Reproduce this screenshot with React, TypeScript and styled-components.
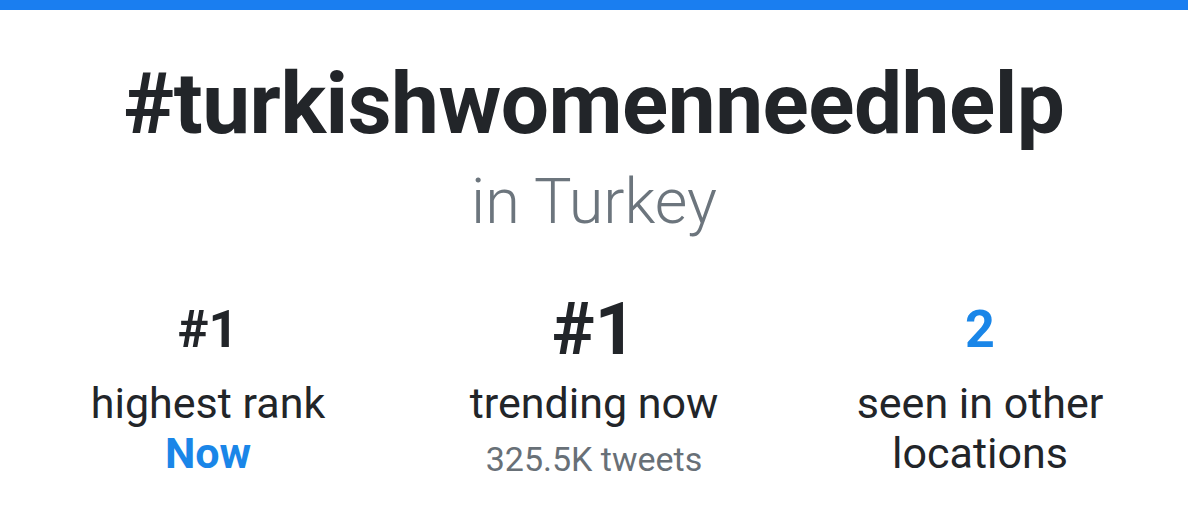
import styled, { createGlobalStyle } from "styled-components";

const GlobalStyle = createGlobalStyle`
  html, body {
    margin: 0;
    padding: 0;
    background: #ffffff;
  }
  body {
    font-family: Roboto, "Noto Sans", "Liberation Sans", sans-serif;
    color: #222529;
  }
`;

const Card = styled.div`
  width: 1188px;
  height: 524px;
  background: #fff;
  border-top: 10px solid #1a7ef0;
  box-sizing: border-box;
  display: flex;
  flex-direction: column;
  align-items: center;
`;

const Hashtag = styled.h1`
  margin: 44px 0 0;
  font-size: 85.5px;
  line-height: 100px;
  font-weight: 700;
  letter-spacing: -0.5px;
  color: #222529;
`;

const Location = styled.div`
  margin-top: 12px;
  font-size: 63px;
  line-height: 72px;
  font-weight: 300;
  color: #6c757d;
`;

const Stats = styled.div`
  align-self: stretch;
  margin-top: 56px;
  padding: 0 15px;
  display: grid;
  grid-template-columns: repeat(3, 1fr);
  text-align: center;
`;

const Stat = styled.div`
  display: flex;
  flex-direction: column;
  align-items: center;
`;

const Value = styled.div<{ $big?: boolean; $accent?: boolean }>`
  margin-bottom: 12px;
  font-size: ${({ $big }) => ($big ? "72px" : "52px")};
  line-height: 72px;
  font-weight: 700;
  color: ${({ $accent }) => ($accent ? "#1a86e8" : "#222529")};
`;

const Label = styled.div`
  font-size: 43px;
  line-height: 50px;
  font-weight: 400;
  color: #222529;
`;

const Note = styled.div<{ $accent?: boolean }>`
  padding-top: ${({ $accent }) => ($accent ? "0" : "6px")};
  font-size: ${({ $accent }) => ($accent ? "43px" : "34px")};
  line-height: 50px;
  font-weight: ${({ $accent }) => ($accent ? 700 : 400)};
  color: ${({ $accent }) => ($accent ? "#1a86e8" : "#687077")};
`;

export default function App() {
  return (
    <>
      <GlobalStyle />
      <Card>
        <Hashtag>#turkishwomenneedhelp</Hashtag>
        <Location>in Turkey</Location>
        <Stats>
          <Stat>
            <Value>#1</Value>
            <Label>highest rank</Label>
            <Note $accent>Now</Note>
          </Stat>
          <Stat>
            <Value $big>#1</Value>
            <Label>trending now</Label>
            <Note>325.5K tweets</Note>
          </Stat>
          <Stat>
            <Value $accent>2</Value>
            <Label>seen in other</Label>
            <Label>locations</Label>
          </Stat>
        </Stats>
      </Card>
    </>
  );
}
